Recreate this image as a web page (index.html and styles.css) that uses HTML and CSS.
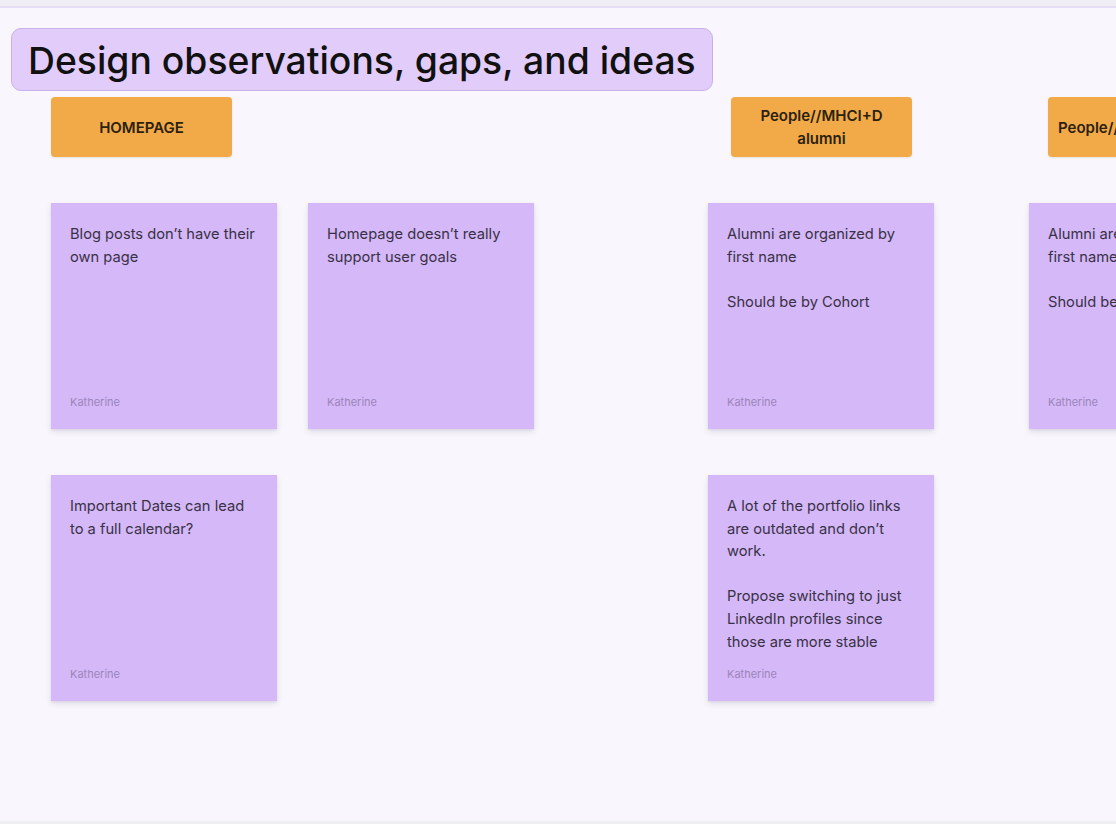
FILE: index.html
```html
<!DOCTYPE html>
<html lang="en">
<head>
<meta charset="utf-8">
<title>Design observations, gaps, and ideas</title>
<link rel="stylesheet" href="styles.css">
</head>
<body>
<div class="topbar"></div>
<main class="canvas">
  <h1 class="title">Design observations, gaps, and ideas</h1>
  <div class="sections">
    <section class="group group-home">
      <div class="label label-home">HOMEPAGE</div>
      <div class="stickies two">
        <div class="sticky">
          <p class="note">Blog posts don’t have their own page</p>
          <span class="author">Katherine</span>
        </div>
        <div class="sticky">
          <p class="note">Homepage doesn’t really support user goals</p>
          <span class="author">Katherine</span>
        </div>
        <div class="sticky">
          <p class="note">Important Dates can lead to a full calendar?</p>
          <span class="author">Katherine</span>
        </div>
      </div>
    </section>
    <section class="group group-alumni">
      <div class="label label-alumni">People//MHCI+D alumni</div>
      <div class="stickies one">
        <div class="sticky">
          <p class="note">Alumni are organized by first name<br><br>Should be by Cohort</p>
          <span class="author">Katherine</span>
        </div>
        <div class="sticky">
          <p class="note">A lot of the portfolio links are outdated and don’t work.<br><br>Propose switching to just LinkedIn profiles since those are more stable</p>
          <span class="author">Katherine</span>
        </div>
      </div>
    </section>
    <section class="group group-third">
      <div class="label label-third">People//Faculty</div>
      <div class="stickies one">
        <div class="sticky">
          <p class="note">Alumni are organized by first name<br><br>Should be by Cohort</p>
          <span class="author">Katherine</span>
        </div>
      </div>
    </section>
  </div>
</main>
<div class="bottombar"></div>
</body>
</html>
```

FILE: styles.css
```css
* { box-sizing: border-box; }

html, body {
  margin: 0;
  padding: 0;
  width: 1116px;
  height: 824px;
  overflow: hidden;
  background: #f9f7fd;
  font-family: Inter, "Noto Sans", "Liberation Sans", sans-serif;
}

.topbar {
  height: 8px;
  background: #f0eef4;
  border-bottom: 2px solid #e6ddf7;
}

.canvas {
  height: 813px;
  background: #f9f7fd;
  padding: 20px 0 0 11px;
  overflow: hidden;
}

.bottombar {
  height: 3px;
  background: #efeef3;
}

.title {
  margin: 0;
  width: 702px;
  height: 63px;
  display: flex;
  align-items: center;
  padding: 2px 0 0 16px;
  background: #e2cdfa;
  border: 1px solid #c7b1e8;
  border-radius: 10px;
  font-size: 37.3px;
  font-weight: 500;
  color: #111111;
  white-space: nowrap;
}

.sections {
  display: flex;
  align-items: flex-start;
  margin-top: 6px;
  width: 1400px;
}

.group {
  display: flex;
  flex-direction: column;
}

.group-home { margin-left: 40px; }
.group-alumni { margin-left: 174px; }
.group-third { margin-left: 95px; }

.label {
  width: 181px;
  height: 60px;
  background: #f2aa48;
  border-radius: 4px;
  display: flex;
  align-items: center;
  justify-content: center;
  text-align: center;
  padding: 0 14px;
  font-size: 15px;
  font-weight: 600;
  line-height: 23px;
  color: #2b2110;
  box-shadow: 0 1px 2px rgba(120, 80, 20, 0.12);
}

.label-alumni { margin-left: 23px; }
.label-third {
  margin-left: 19px;
  white-space: nowrap;
  padding: 0 10px;
  justify-content: flex-start;
  text-align: left;
}

.stickies {
  display: grid;
  grid-template-columns: repeat(2, 226px);
  column-gap: 31px;
  row-gap: 46px;
  margin-top: 46px;
}

.stickies.one { grid-template-columns: 226px; }

.sticky {
  width: 226px;
  height: 226px;
  background: #d4b8f8;
  padding: 20px 17px 20px 19px;
  display: flex;
  flex-direction: column;
  box-shadow: 0 3px 6px rgba(60, 40, 90, 0.12), 0 1px 2px rgba(60, 40, 90, 0.08);
}

.note {
  margin: 0;
  font-size: 14.7px;
  line-height: 22.6px;
  color: #3a3146;
}

.author {
  margin-top: auto;
  font-size: 11px;
  line-height: 14px;
  color: #9b86b8;
}
```
